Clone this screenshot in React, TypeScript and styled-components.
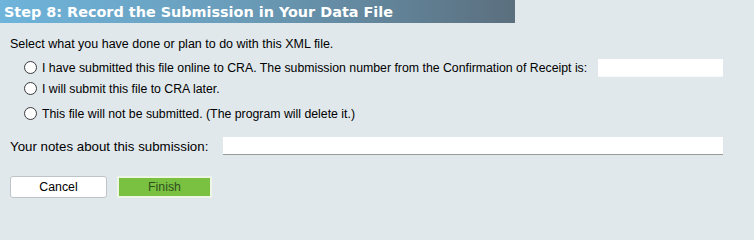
import React, { useState } from "react";
import styled, { createGlobalStyle } from "styled-components";

const GlobalStyle = createGlobalStyle`
  html, body {
    margin: 0;
    padding: 0;
    background: #e1e8ec;
  }
  body {
    font-family: "Liberation Sans", Arial, sans-serif;
    font-size: 12px;
    color: #000;
  }
`;

const Page = styled.div`
  width: 754px;
  height: 215px;
  background: #e1e8ec;
  display: flex;
  flex-direction: column;
  overflow: hidden;
`;

const StepHeader = styled.div`
  width: 515px;
  height: 23px;
  box-sizing: border-box;
  padding-left: 4px;
  display: flex;
  align-items: center;
  background: linear-gradient(to right, #6eb4db 0%, #6a9dba 45%, #5b6f7e 100%);
  color: #fff;
  font-family: "DejaVu Sans", Verdana, sans-serif;
  font-weight: bold;
  font-size: 14.4px;
`;

const Content = styled.div`
  display: flex;
  flex-direction: column;
  padding: 0 31px 0 10px;
`;

const Prompt = styled.div`
  margin-top: 14px;
  line-height: 15px;
  font-size: 12.5px;
`;

const OptionList = styled.div`
  display: flex;
  flex-direction: column;
  margin-top: 5px;
  padding-left: 14px;
  font-size: 12.3px;
`;

const OptionRow = styled.label<{ $gap?: number }>`
  display: flex;
  align-items: center;
  height: 21px;
  margin-top: ${(p) => p.$gap ?? 0}px;
  cursor: default;
`;

const RadioCircle = styled.span<{ $checked: boolean }>`
  width: 11px;
  height: 11px;
  border-radius: 50%;
  border: 1px solid #3c3c3c;
  background: radial-gradient(circle, #fff 60%, #f0f0f0 100%);
  margin-right: 5px;
  flex-shrink: 0;
  display: flex;
  align-items: center;
  justify-content: center;

  &::after {
    content: "";
    width: 5px;
    height: 5px;
    border-radius: 50%;
    background: #222;
    display: ${(p) => (p.$checked ? "block" : "none")};
  }
`;

const OptionText = styled.span`
  flex: 1;
`;

const TextBox = styled.input<{ $width: number; $underline?: boolean }>`
  width: ${(p) => p.$width}px;
  height: 18px;
  box-sizing: border-box;
  border: none;
  border-bottom: 1px solid ${(p) => (p.$underline ? "#9a9a9a" : "#f6f8f9")};
  background: #fff;
  outline: none;
  font-family: inherit;
  font-size: 12px;
  padding: 0 3px;
`;

const NotesRow = styled.div`
  display: flex;
  align-items: center;
  justify-content: space-between;
  margin-top: 13px;
  font-size: 13.3px;
`;

const ButtonBar = styled.div`
  display: flex;
  gap: 10px;
  margin-top: 21px;
`;

const Button = styled.button<{ $primary?: boolean }>`
  width: ${(p) => (p.$primary ? 95 : 97)}px;
  height: 22px;
  box-sizing: border-box;
  font-family: "Liberation Sans", Arial, sans-serif;
  font-size: 12.3px;
  padding: 0;
  cursor: pointer;
  border-radius: ${(p) => (p.$primary ? "1px" : "3px")};
  background: ${(p) => (p.$primary ? "#7ac142" : "#fff")};
  color: ${(p) => (p.$primary ? "#2f4f1c" : "#000")};
  border: ${(p) => (p.$primary ? "2px solid #eef5e6" : "1px solid #bfc4c8")};
`;

const options = [
  "I have submitted this file online to CRA. The submission number from the Confirmation of Receipt is:",
  "I will submit this file to CRA later.",
  "This file will not be submitted. (The program will delete it.)",
];

export default function App() {
  const [choice, setChoice] = useState<number | null>(null);

  return (
    <Page>
      <GlobalStyle />
      <StepHeader>Step 8: Record the Submission in Your Data File</StepHeader>
      <Content>
        <Prompt>Select what you have done or plan to do with this XML file.</Prompt>
        <OptionList>
          {options.map((text, i) => (
            <OptionRow key={i} $gap={i === 2 ? 4 : 0} onClick={() => setChoice(i)}>
              <RadioCircle $checked={choice === i} />
              <OptionText>{text}</OptionText>
              {i === 0 && <TextBox $width={125} />}
            </OptionRow>
          ))}
        </OptionList>
        <NotesRow>
          <span>Your notes about this submission:</span>
          <TextBox $width={500} $underline />
        </NotesRow>
        <ButtonBar>
          <Button>Cancel</Button>
          <Button $primary>Finish</Button>
        </ButtonBar>
      </Content>
    </Page>
  );
}
